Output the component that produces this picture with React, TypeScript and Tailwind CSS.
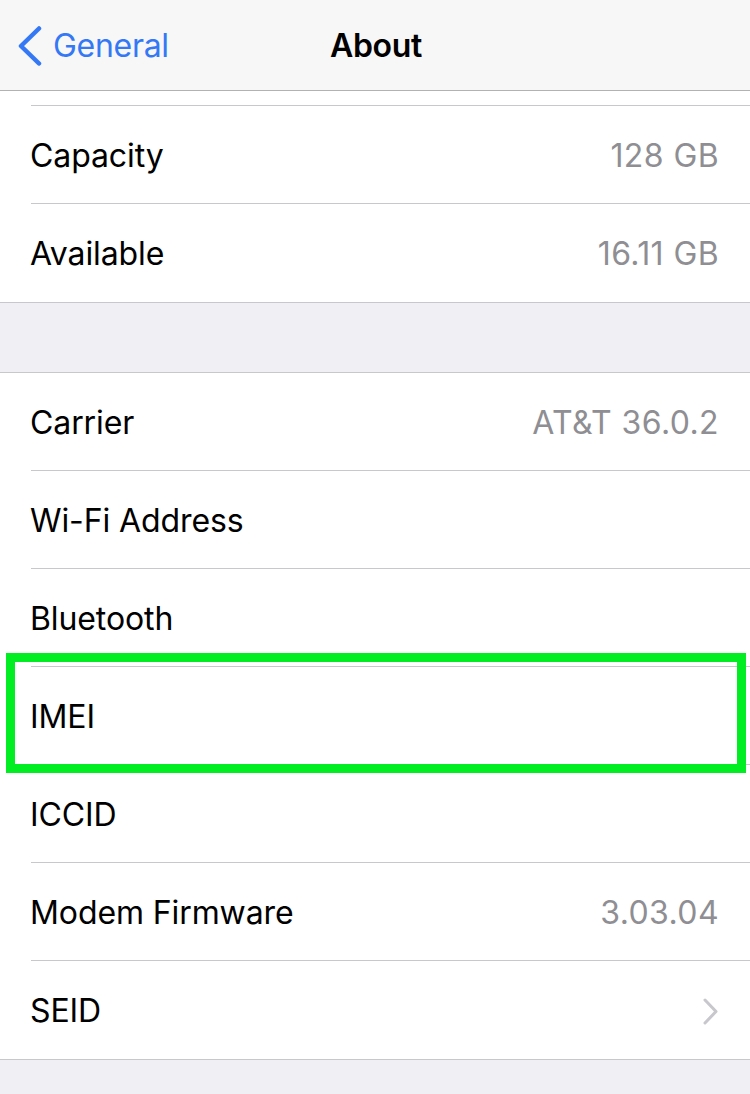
type Row = { label: string; value?: string; chevron?: boolean };

const storage: Row[] = [
  { label: "Capacity", value: "128 GB" },
  { label: "Available", value: "16.11 GB" },
];

const network: Row[] = [
  { label: "Carrier", value: "AT&T 36.0.2" },
  { label: "Wi-Fi Address" },
  { label: "Bluetooth" },
  { label: "IMEI" },
  { label: "ICCID" },
  { label: "Modem Firmware", value: "3.03.04" },
  { label: "SEID", chevron: true },
];

function SettingsRow({ row, last }: { row: Row; last: boolean }) {
  return (
    <div className="pl-[31px]">
      <div
        className={`h-[98px] flex items-center justify-between pr-[31px] pt-[2px] ${
          last ? "" : "border-b border-[#c8c7cc]"
        }`}
      >
        <span className="text-[32px] text-black tracking-[-0.1px] -ml-[1px]">{row.label}</span>
        {row.value && (
          <span className="text-[32px] text-[#8e8e93] tracking-[0.4px]">{row.value}</span>
        )}
        {row.chevron && (
          <svg width="15" height="27" viewBox="0 0 15 27" fill="none" className="mr-[1px]">
            <path
              d="M2 2 L13 13.5 L2 25"
              stroke="#c7c7cc"
              strokeWidth="3"
              strokeLinecap="round"
              strokeLinejoin="round"
            />
          </svg>
        )}
      </div>
    </div>
  );
}

export default function App() {
  return (
    <div
      className="relative w-[750px] h-[1094px] overflow-hidden bg-[#efeff4]"
      style={{ fontFamily: "Inter, 'Noto Sans', sans-serif" }}
    >
      {/* nav bar */}
      <div className="relative h-[91px] bg-[#f7f7f7] border-b border-[#b2b2b2] flex items-center">
        <div className="flex items-center pl-[18px] gap-[11px] text-[#3478f6] pt-[2px]">
          <svg width="24" height="40" viewBox="0 0 24 40" fill="none">
            <path
              d="M21 2.5 L3 20 L21 37.5"
              stroke="#3478f6"
              strokeWidth="4.5"
              strokeLinecap="round"
              strokeLinejoin="round"
            />
          </svg>
          <span className="text-[32px] tracking-[-0.3px]">General</span>
        </div>
        <div className="absolute inset-0 flex items-center justify-center pointer-events-none pt-[2px]">
          <span className="text-[32px] font-semibold text-black tracking-[-0.3px] ml-[2px]">
            About
          </span>
        </div>
      </div>

      {/* tail of previous row */}
      <div className="bg-white h-[15px] pl-[31px]">
        <div className="h-full border-b border-[#c8c7cc]" />
      </div>

      <div className="bg-white border-b border-[#c8c7cc]">
        {storage.map((r, i) => (
          <SettingsRow key={r.label} row={r} last={i === storage.length - 1} />
        ))}
      </div>

      <div className="h-[69px]" />

      <div className="bg-white border-y border-[#c8c7cc]">
        {network.map((r, i) => (
          <SettingsRow key={r.label} row={r} last={i === network.length - 1} />
        ))}
      </div>

      {/* highlight overlay */}
      <div className="absolute left-[6px] top-[653px] w-[740px] h-[120px] border-[9px] border-[#00ee22]" />
    </div>
  );
}
